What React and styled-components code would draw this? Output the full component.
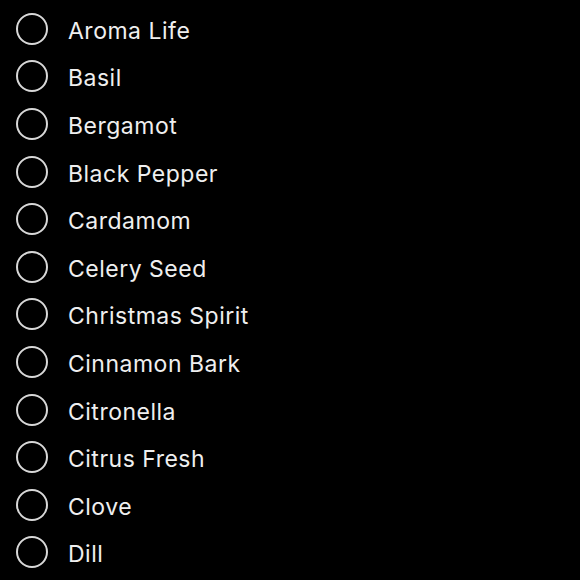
import React from "react";
import styled, { createGlobalStyle } from "styled-components";

const oils = [
  "Aroma Life",
  "Basil",
  "Bergamot",
  "Black Pepper",
  "Cardamom",
  "Celery Seed",
  "Christmas Spirit",
  "Cinnamon Bark",
  "Citronella",
  "Citrus Fresh",
  "Clove",
  "Dill",
];

const GlobalStyle = createGlobalStyle`
  html, body {
    margin: 0;
    padding: 0;
    background: #000;
  }
  body {
    font-family: Inter, "Noto Sans", sans-serif;
  }
`;

const List = styled.ul`
  list-style: none;
  margin: 0;
  padding: 5px 0 0 16px;
  height: 580px;
  box-sizing: border-box;
  overflow: hidden;
`;

const Row = styled.li`
  display: flex;
  align-items: center;
  gap: 20px;
  height: 47.6px;
`;

const Radio = styled.span`
  width: 32px;
  height: 32px;
  box-sizing: border-box;
  border: 2px solid #d8d8d8;
  border-radius: 50%;
  flex-shrink: 0;
`;

const Label = styled.span`
  color: #efefef;
  font-size: 23px;
  letter-spacing: 0.5px;
  margin-top: 4px;
`;

function App() {
  return (
    <>
      <GlobalStyle />
      <List>
        {oils.map((name) => (
          <Row key={name}>
            <Radio />
            <Label>{name}</Label>
          </Row>
        ))}
      </List>
    </>
  );
}

export default App;
